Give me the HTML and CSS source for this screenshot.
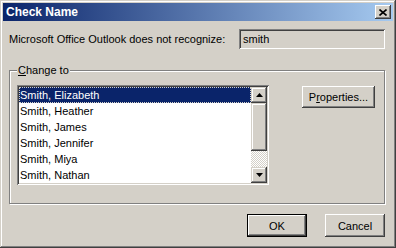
FILE: index.html
```html
<!DOCTYPE html>
<html lang="en">
<head>
  <meta charset="UTF-8" />
  <title>Check Name</title>
  <link rel="stylesheet" href="styles.css">
</head>
<body>
  <div class="window">
    <div class="titlebar">
      <span class="title">Check Name</span>
      <button class="close-btn" type="button">
        <svg width="8" height="7" viewBox="0 0 8 7"><path d="M0.5 0.5 L7.5 6.5 M7.5 0.5 L0.5 6.5" stroke="#000" stroke-width="1.6"/></svg>
      </button>
    </div>

    <div class="dialog-body">
      <div class="name-row">
        <span class="name-label">Microsoft Office Outlook does not recognize:</span>
        <div class="name-field">smith</div>
      </div>

      <!-- Change to group -->
      <fieldset class="group">
        <legend><u>C</u>hange to</legend>
        <div class="group-inner">
          <div class="listbox">
            <ul class="items">
              <li class="selected">Smith, Elizabeth</li>
              <li>Smith, Heather</li>
              <li>Smith, James</li>
              <li>Smith, Jennifer</li>
              <li>Smith, Miya</li>
              <li>Smith, Nathan</li>
            </ul>
            <div class="scrollbar">
              <div class="sb-btn">
                <svg width="7" height="4" viewBox="0 0 7 4"><polygon points="3.5,0 7,4 0,4" fill="#000"/></svg>
              </div>
              <div class="sb-thumb"></div>
              <div class="sb-track"></div>
              <div class="sb-btn">
                <svg width="7" height="4" viewBox="0 0 7 4"><polygon points="0,0 7,0 3.5,4" fill="#000"/></svg>
              </div>
            </div>
          </div>
          <button class="btn props-btn" type="button">P<u>r</u>operties...</button>
        </div>
      </fieldset>

      <div class="actions">
        <button class="btn default" type="button">OK</button>
        <button class="btn" type="button">Cancel</button>
      </div>
    </div>
  </div>
</body>
</html>
```

FILE: styles.css
```css
body {
  margin: 0;
  font-family: "Liberation Sans", Arial, sans-serif;
  font-size: 11px;
  color: #000;
}

.window {
  width: 396px;
  height: 248px;
  box-sizing: border-box;
  padding: 3px;
  background: #d4d0c8;
  box-shadow: inset -1px -1px #404040, inset 1px 1px #d4d0c8,
              inset -2px -2px #808080, inset 2px 2px #fff;
}

.titlebar {
  height: 18px;
  display: flex;
  align-items: center;
  justify-content: space-between;
  padding-left: 3px;
  background: linear-gradient(to right, #0a246a, #a6caf0);
}

.title {
  color: #fff;
  font-weight: bold;
  font-size: 12px;
}

.close-btn {
  width: 16px;
  height: 14px;
  margin-right: 2px;
  padding: 0;
  border: none;
  background: #d4d0c8;
  display: flex;
  align-items: center;
  justify-content: center;
  box-shadow: inset -1px -1px #404040, inset 1px 1px #fff,
              inset -2px -2px #808080, inset 2px 2px #d4d0c8;
}

.dialog-body {
  padding: 8px 8px 0 6px;
}

.name-row {
  display: flex;
  align-items: center;
  justify-content: space-between;
}

.name-field {
  width: 146px;
  height: 20px;
  box-sizing: border-box;
  padding: 3px 4px;
  line-height: 14px;
  background: #d4d0c8;
  box-shadow: inset 1px 1px #808080, inset -1px -1px #fff,
              inset 2px 2px #404040, inset -2px -2px #d4d0c8;
}

.group {
  margin: 15px 0 0;
  padding: 8px 9px 18px 7px;
  border: 1px solid #808080;
  box-shadow: inset 1px 1px #fff, 1px 1px #fff;
}

.group legend {
  padding: 0 1px;
  line-height: 13px;
  background: #d4d0c8;
}

.group-inner {
  display: flex;
  align-items: flex-start;
  justify-content: space-between;
}

.listbox {
  width: 252px;
  height: 100px;
  box-sizing: border-box;
  padding: 2px;
  display: flex;
  background: #fff;
  box-shadow: inset 1px 1px #808080, inset -1px -1px #fff,
              inset 2px 2px #404040, inset -2px -2px #d4d0c8;
}

.items {
  flex: 1;
  margin: 0;
  padding: 0;
  list-style: none;
}

.items li {
  height: 16px;
  line-height: 16px;
  padding-left: 1px;
}

.items li.selected {
  background: #0a246a;
  color: #fff;
  outline: 1px dotted #d4d0c8;
  outline-offset: -1px;
}

.scrollbar {
  width: 16px;
  display: flex;
  flex-direction: column;
}

.sb-btn,
.sb-thumb {
  background: #d4d0c8;
  box-shadow: inset -1px -1px #404040, inset 1px 1px #d4d0c8,
              inset -2px -2px #808080, inset 2px 2px #fff;
}

.sb-btn {
  height: 16px;
  display: flex;
  align-items: center;
  justify-content: center;
}

.sb-thumb {
  height: 48px;
}

.sb-track {
  flex: 1;
  background: repeating-conic-gradient(#fff 0 25%, #d4d0c8 0 50%) 0 0 / 2px 2px;
}

.btn {
  height: 23px;
  padding: 0;
  border: none;
  font-family: inherit;
  font-size: 11px;
  color: #000;
  background: #d4d0c8;
  box-shadow: inset -1px -1px #404040, inset 1px 1px #fff,
              inset -2px -2px #808080, inset 2px 2px #d4d0c8;
}

.props-btn {
  width: 73px;
  height: 22px;
  margin-top: 1px;
}

.actions {
  display: flex;
  justify-content: flex-end;
  gap: 18px;
  margin-top: 10px;
}

.actions .btn {
  width: 60px;
}

.btn.default {
  border: 1px solid #000;
  box-shadow: inset -1px -1px #404040, inset 1px 1px #fff,
              inset -2px -2px #808080, inset 2px 2px #d4d0c8;
}
```
